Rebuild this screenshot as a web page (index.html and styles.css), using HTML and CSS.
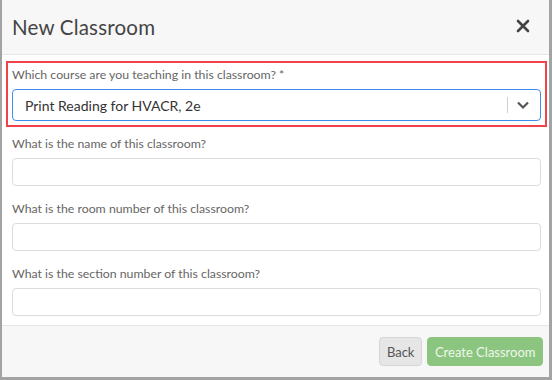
FILE: index.html
```html
<!DOCTYPE html>
<html lang="en">

<head>
    <meta charset="UTF-8">
    <meta name="viewport" content="width=device-width, initial-scale=1.0">
    <title>New Classroom</title>
    <link rel="stylesheet" href="styles.css">
</head>

<body>
    <div class="modal">
        <div class="modal-header">
            <h1 class="modal-title">New Classroom</h1>
            <button class="close" aria-label="Close">
                <svg width="14" height="14" viewBox="0 0 14 14">
                    <path d="M2 2 L12 12 M12 2 L2 12" stroke="#444" stroke-width="2.6" stroke-linecap="round" fill="none" />
                </svg>
            </button>
        </div>
        <div class="modal-body">
            <div class="form-group highlight">
                <label>Which course are you teaching in this classroom? *</label>
                <div class="select">
                    <span class="select-value">Print Reading for HVACR, 2e</span>
                    <span class="select-sep"></span>
                    <svg class="select-arrow" width="14" height="10" viewBox="0 0 14 10">
                        <path d="M2 2.5 L7 7.5 L12 2.5" stroke="#555" stroke-width="2.2" fill="none" />
                    </svg>
                </div>
            </div>
            <div class="form-group">
                <label>What is the name of this classroom?</label>
                <input type="text">
            </div>
            <div class="form-group">
                <label>What is the room number of this classroom?</label>
                <input type="text">
            </div>
            <div class="form-group">
                <label>What is the section number of this classroom?</label>
                <input type="text">
            </div>
        </div>
        <div class="modal-footer">
            <button class="btn btn-back">Back</button>
            <button class="btn btn-create">Create Classroom</button>
        </div>
    </div>
</body>

</html>
```

FILE: styles.css
```css
body {
    margin: 0;
    background-color: #a3a3a3;
    font-family: 'Lato', 'Open Sans', sans-serif;
    width: 552px;
    height: 380px;
    overflow: hidden;
}

.modal {
    margin: 0 3px 0 2px;
    height: 377px;
    background-color: #fff;
    display: flex;
    flex-direction: column;
}

.modal-header {
    flex-shrink: 0;
    height: 55px;
    box-sizing: border-box;
    background-color: #f7f7f7;
    border-bottom: 1px solid #e6e6e6;
    display: flex;
    align-items: center;
    justify-content: space-between;
    padding: 0 19px 0 10px;
}

.modal-title {
    margin: 0;
    font-size: 20.5px;
    font-weight: normal;
    color: #444;
    letter-spacing: 0.2px;
}

.close {
    background: none;
    border: none;
    padding: 0;
    cursor: pointer;
    display: flex;
    margin-top: -2px;
}

.modal-body {
    flex: 1;
    padding: 12px 8px 0 10px;
}

.form-group {
    margin-bottom: 15px;
}

.form-group:last-child {
    margin-bottom: 0;
}

.form-group.highlight {
    outline: 2px solid #f0424a;
    outline-offset: 4px;
}

label {
    display: block;
    font-size: 12.3px;
    line-height: 16px;
    color: #666;
    margin-bottom: 6px;
}

input {
    display: block;
    box-sizing: border-box;
    width: 100%;
    height: 28px;
    border: 1px solid #dcdcdc;
    border-radius: 4px;
    padding: 0 10px;
    font-family: inherit;
}

.select {
    box-sizing: border-box;
    height: 32px;
    border: 1.5px solid #3d8ef0;
    border-radius: 4px;
    display: flex;
    align-items: center;
    padding: 0 10px 0 12px;
}

.select-value {
    flex: 1;
    font-size: 14px;
    color: #333;
}

.select-sep {
    width: 1px;
    height: 16px;
    background-color: #d0d0d0;
    margin-right: 8px;
}

.modal-footer {
    flex-shrink: 0;
    height: 52px;
    box-sizing: border-box;
    background-color: #f7f7f7;
    border-top: 1px solid #e6e6e6;
    display: flex;
    align-items: center;
    justify-content: flex-end;
    gap: 5px;
    padding: 0 6px 0 0;
}

.btn {
    height: 29px;
    border-radius: 4px;
    font-family: inherit;
    font-size: 13px;
    white-space: nowrap;
    cursor: pointer;
}

.btn-back {
    background-color: #e6e6e6;
    border: 1px solid #d6d6d6;
    color: #555;
    padding: 0 7px;
}

.btn-create {
    background-color: #8bc57f;
    border: 1px solid #8bc57f;
    color: #eef7ec;
    padding: 0 6.5px;
}
```
